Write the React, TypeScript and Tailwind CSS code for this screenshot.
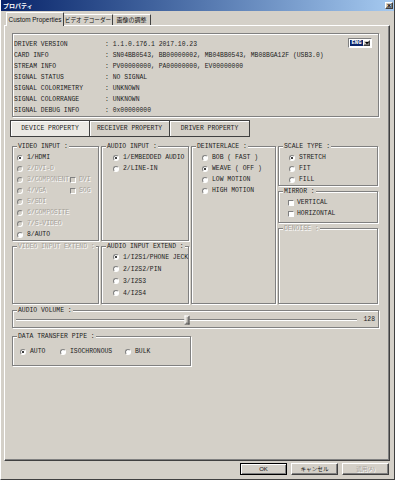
import type { ReactNode } from "react";

const MONO = "font-['Liberation_Mono','DejaVu_Sans_Mono',monospace] text-[6.4px]";
const UI = "font-['Liberation_Sans','Noto_Sans_CJK_JP',sans-serif]";
const DIS = "text-[#a6a29a] [text-shadow:1px_1px_0_#ffffff]";
const ETCH = "border border-[#808080] shadow-[inset_1px_1px_0_#ffffff,1px_1px_0_#ffffff]";
const RAISED = "border border-t-white border-l-white border-r-[#404040] border-b-[#404040] shadow-[inset_-1px_-1px_0_#808080]";

const info = [
  ["DRIVER VERSION", "1.1.0.176.1 2017.10.23"],
  ["CARD INFO", "SN04BB0543, BB00000002, MB04BB0543, MB08BGA12F (USB3.0)"],
  ["STREAM INFO", "PV00000000, PA00000000, EV00000000"],
  ["SIGNAL STATUS", "NO SIGNAL"],
  ["SIGNAL COLORIMETRY", "UNKNOWN"],
  ["SIGNAL COLORRANGE", "UNKNOWN"],
  ["SIGNAL DEBUG INFO", "0x00000000"],
];

const volume = 128;

function Radio({ label, checked = false, disabled = false, tall = false }: { label: string; checked?: boolean; disabled?: boolean; tall?: boolean }) {
  return (
    <div className={`flex items-center gap-[4px] ${tall ? "h-[12px]" : "h-[11px]"}`}>
      <span
        className={`flex h-[6px] w-[6px] shrink-0 items-center justify-center rounded-full border border-[#808080] border-b-white border-r-white ${disabled ? "bg-[#d4d0c8]" : "bg-white"}`}
      >
        {checked && <span className="h-[2px] w-[2px] rounded-full bg-black" />}
      </span>
      <span className={`whitespace-nowrap ${disabled ? DIS : "text-[#1c1c1c]"}`}>{label}</span>
    </div>
  );
}

function Check({ label, disabled = false }: { label: string; disabled?: boolean }) {
  return (
    <div className="flex h-[11px] items-center gap-[3px]">
      <span
        className={`h-[6px] w-[6px] shrink-0 border border-[#808080] border-b-white border-r-white ${disabled ? "bg-[#d4d0c8]" : "bg-white"}`}
      />
      <span className={`whitespace-nowrap ${disabled ? DIS : "text-[#1c1c1c]"}`}>{label}</span>
    </div>
  );
}

function Group({ label, disabled = false, className = "", children }: { label: string; disabled?: boolean; className?: string; children?: ReactNode }) {
  return (
    <div className={`relative ${ETCH} ${className}`}>
      <span
        className={`absolute -top-[5px] left-[4px] bg-[#d4d0c8] px-[1px] leading-[9px] whitespace-nowrap ${disabled ? DIS : "text-[#1c1c1c]"}`}
      >
        {label}
      </span>
      {children}
    </div>
  );
}

export default function App() {
  return (
    <div
      className={`flex h-[480px] w-[395px] flex-col overflow-hidden border-b border-l border-r border-b-[#404040] border-l-white border-r-[#404040] bg-[#d4d0c8] ${UI}`}
    >
      {/* title bar */}
      <div className="flex h-[11px] shrink-0 items-center justify-between bg-linear-to-r from-[#0a246a] to-[#a6caf0]">
        <span className="pl-[2px] text-[6px] font-bold leading-none text-white">プロパティ</span>
        <span className={`mr-[1px] flex h-[7px] w-[8px] items-center justify-center bg-[#d4d0c8] text-[7px] font-bold leading-none text-black ${RAISED}`}>
          ×
        </span>
      </div>

      {/* tabs */}
      <div className="mt-[1px] flex h-[13px] shrink-0 items-end pl-[5px]">
        <div className="relative z-10 -mb-[1px] flex h-[14px] w-[58px] items-center justify-center whitespace-nowrap rounded-t-[1px] border-l border-r border-t border-l-white border-r-[#404040] border-t-white bg-[#d4d0c8] text-[6.4px] text-[#111]">
          Custom Properties
        </div>
        <div className="flex h-[11px] w-[49px] items-center justify-center whitespace-nowrap rounded-t-[1px] border-r border-t border-r-[#404040] border-t-white text-[5.6px] text-[#111]">
          ビデオ デコーダー
        </div>
        <div className="flex h-[11px] w-[38px] items-center justify-center whitespace-nowrap rounded-t-[1px] border-r border-t border-r-[#404040] border-t-white text-[6px] text-[#111]">
          画像の調整
        </div>
      </div>

      {/* panel */}
      <div className={`ml-[3px] flex h-[436px] w-[386px] shrink-0 flex-col ${RAISED} ${MONO}`}>
        {/* info box */}
        <div className={`ml-[7px] mt-[7px] flex h-[84px] w-[367px] ${ETCH}`}>
          <div className="flex flex-col pl-[1px] pt-[5px]">
            {info.map(([k, v]) => (
              <div key={k} className="flex h-[11.1px] items-center whitespace-nowrap text-[#1c1c1c]">
                <span className="w-[91px]">{k}</span>
                <span>: {v}</span>
              </div>
            ))}
          </div>
          <div className="ml-auto mr-[6px] mt-[4px] flex h-[10px] w-[24px] border border-[#808080] border-b-white border-r-white bg-white p-[1px]">
            <span className="flex flex-1 items-center justify-center bg-[#0a246a] text-[5.6px] font-bold leading-none text-white">ENG</span>
            <span className={`flex w-[7px] items-center justify-center bg-[#d4d0c8] ${RAISED}`}>
              <svg width="4" height="3" viewBox="0 0 4 3">
                <path d="M0 0h4L2 2.5z" fill="#000" />
              </svg>
            </span>
          </div>
        </div>

        {/* property pages */}
        <div className="ml-[5px] mt-[3px] flex h-[17px]">
          <div className="flex w-[80px] items-center justify-center border border-[#404040] bg-[#ebe9e4] text-[#1c1c1c] shadow-[inset_1px_1px_0_#ffffff]">
            DEVICE PROPERTY
          </div>
          <div className="-ml-[1px] flex w-[81px] items-center justify-center border border-[#404040] text-[#1c1c1c] shadow-[inset_1px_1px_0_#ffffff]">
            RECEIVER PROPERTY
          </div>
          <div className="-ml-[1px] flex w-[81px] items-center justify-center border border-[#404040] text-[#1c1c1c] shadow-[inset_1px_1px_0_#ffffff]">
            DRIVER PROPERTY
          </div>
        </div>

        {/* groups */}
        <div className="ml-[7px] mt-[9px] flex h-[158px] gap-[2px]">
          <div className="flex w-[87px] flex-col gap-[5px]">
            <Group label="VIDEO INPUT :" className="h-[96px] pl-[4px] pt-[5px]">
              <Radio label="1/HDMI" checked />
              <Radio label="2/DVI-D" disabled />
              <div className="flex">
                <div className="w-[53px]">
                  <Radio label="3/COMPONENT" disabled />
                </div>
                <Check label="DVI" disabled />
              </div>
              <div className="flex">
                <div className="w-[53px]">
                  <Radio label="4/VGA" disabled />
                </div>
                <Check label="SOG" disabled />
              </div>
              <Radio label="5/SDI" disabled />
              <Radio label="6/COMPOSITE" disabled />
              <Radio label="7/S-VIDEO" disabled />
              <Radio label="8/AUTO" />
            </Group>
            <Group label="VIDEO INPUT EXTEND :" disabled className="h-[58px]" />
          </div>

          <div className="flex w-[88px] flex-col gap-[5px]">
            <Group label="AUDIO INPUT :" className="h-[96px] pl-[11px] pt-[5px]">
              <Radio label="1/EMBEDDED AUDIO" checked />
              <Radio label="2/LINE-IN" />
            </Group>
            <Group label="AUDIO INPUT EXTEND :" className="h-[58px] pl-[11px] pt-[4px]">
              <Radio label="1/I2S1/PHONE JECK" checked tall />
              <Radio label="2/I2S2/PIN" tall />
              <Radio label="3/I2S3" tall />
              <Radio label="4/I2S4" tall />
            </Group>
          </div>

          <Group label="DEINTERLACE :" className="h-[158px] w-[85px] pl-[10px] pt-[5px]">
            <Radio label="BOB ( FAST )" />
            <Radio label="WEAVE ( OFF )" checked />
            <Radio label="LOW MOTION" />
            <Radio label="HIGH MOTION" />
          </Group>

          <div className="flex w-[100px] flex-col gap-[5px]">
            <Group label="SCALE TYPE :" className="h-[40px] pl-[10px] pt-[5px]">
              <Radio label="STRETCH" checked />
              <Radio label="FIT" />
              <Radio label="FILL" />
            </Group>
            <Group label="MIRROR :" className="h-[32px] pl-[9px] pt-[5px]">
              <Check label="VERTICAL" />
              <Check label="HORIZONTAL" />
            </Group>
            <Group label="DENOISE :" disabled className="h-[76px]" />
          </div>
        </div>

        {/* audio volume */}
        <Group label="AUDIO VOLUME :" className="ml-[7px] mt-[6px] flex h-[18px] w-[367px] items-center pl-[3px] pr-[3px]">
          <div className="relative mt-[1px] h-[2px] flex-1 border-b border-t border-b-white border-t-[#808080]">
            <span
              className={`absolute top-1/2 h-[9px] w-[5px] -translate-x-1/2 -translate-y-1/2 bg-[#d4d0c8] ${RAISED}`}
              style={{ left: `${(volume / 255) * 100}%` }}
            />
          </div>
          <span className="ml-[6px] mt-[2px] text-[#1c1c1c]">{volume}</span>
        </Group>

        {/* data transfer pipe */}
        <Group label="DATA TRANSFER PIPE :" className="ml-[7px] mt-[8px] flex h-[30px] w-[179px] pl-[7px] pt-[9px]">
          <div className="w-[40px]">
            <Radio label="AUTO" checked />
          </div>
          <div className="w-[65px]">
            <Radio label="ISOCHRONOUS" />
          </div>
          <Radio label="BULK" />
        </Group>
      </div>

      {/* dialog buttons */}
      <div className="mt-[2px] flex h-[12px] justify-end gap-[4px] pr-[5px]">
        <div className="flex w-[47px] items-center justify-center border border-black bg-[#d4d0c8] text-[6px] text-[#111] shadow-[inset_1px_1px_0_#ffffff,inset_-1px_-1px_0_#808080]">
          OK
        </div>
        <div className={`flex w-[47px] items-center justify-center bg-[#d4d0c8] text-[5.6px] text-[#111] ${RAISED}`}>
          キャンセル
        </div>
        <div className={`flex w-[47px] items-center justify-center bg-[#d4d0c8] text-[5.6px] ${RAISED} ${DIS}`}>
          適用(A)
        </div>
      </div>
    </div>
  );
}
